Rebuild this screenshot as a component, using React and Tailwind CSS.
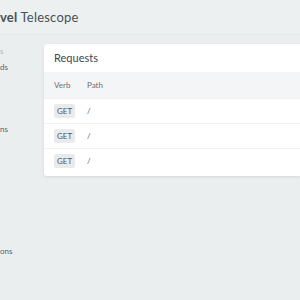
export default function App() {
  const rows = [0, 1, 2];
  return (
    <div className="w-[300px] h-[300px] overflow-hidden bg-[#ebeeee] flex flex-col" style={{ fontFamily: "Lato, 'Noto Sans', sans-serif" }}>
      <div className="h-[35px] shrink-0 bg-[#edf0f0] border-b border-[#e4e7e7] flex items-center">
        <span className="text-[13px] text-[#4a5056] leading-none tracking-[0.2px]">
          <span className="font-bold">vel</span> <span>Telescope</span>
        </span>
      </div>
      <div className="flex flex-1">
        <div className="w-[44px] shrink-0 relative text-[8px] text-[#5a6169] leading-none">
          <div className="absolute left-0 top-[12px] text-[#b0b5ba]">s</div>
          <div className="absolute left-0 top-[28px]">ds</div>
          <div className="absolute left-0 top-[90px]">ns</div>
          <div className="absolute left-0 top-[212px]">ons</div>
        </div>
        <div className="flex-1 pt-[9px]">
          <div className="bg-white rounded-l-[3px] shadow-[0_1px_3px_rgba(0,0,0,0.1)] w-[256px] pb-[3px]">
            <div className="h-[28px] flex items-center pl-[10px] text-[11px] text-[#3d4852]">Requests</div>
            <div className="h-[26px] bg-[#f4f5f6] flex items-center pl-[10px] text-[8px] text-[#6b7075]">
              <span className="w-[33px]">Verb</span>
              <span>Path</span>
            </div>
            {rows.map((r) => (
              <div key={r} className="h-[25px] flex items-center pl-[10px] border-t border-[#f1f2f3] first:border-t-0 text-[8px] text-[#555a5f]">
                <span className="w-[33px]">
                  <span className="bg-[#e9eaeb] rounded-[2px] px-[3px] py-[2px] text-[#555a5f]">GET</span>
                </span>
                <span>/</span>
              </div>
            ))}
          </div>
        </div>
      </div>
    </div>
  );
}
